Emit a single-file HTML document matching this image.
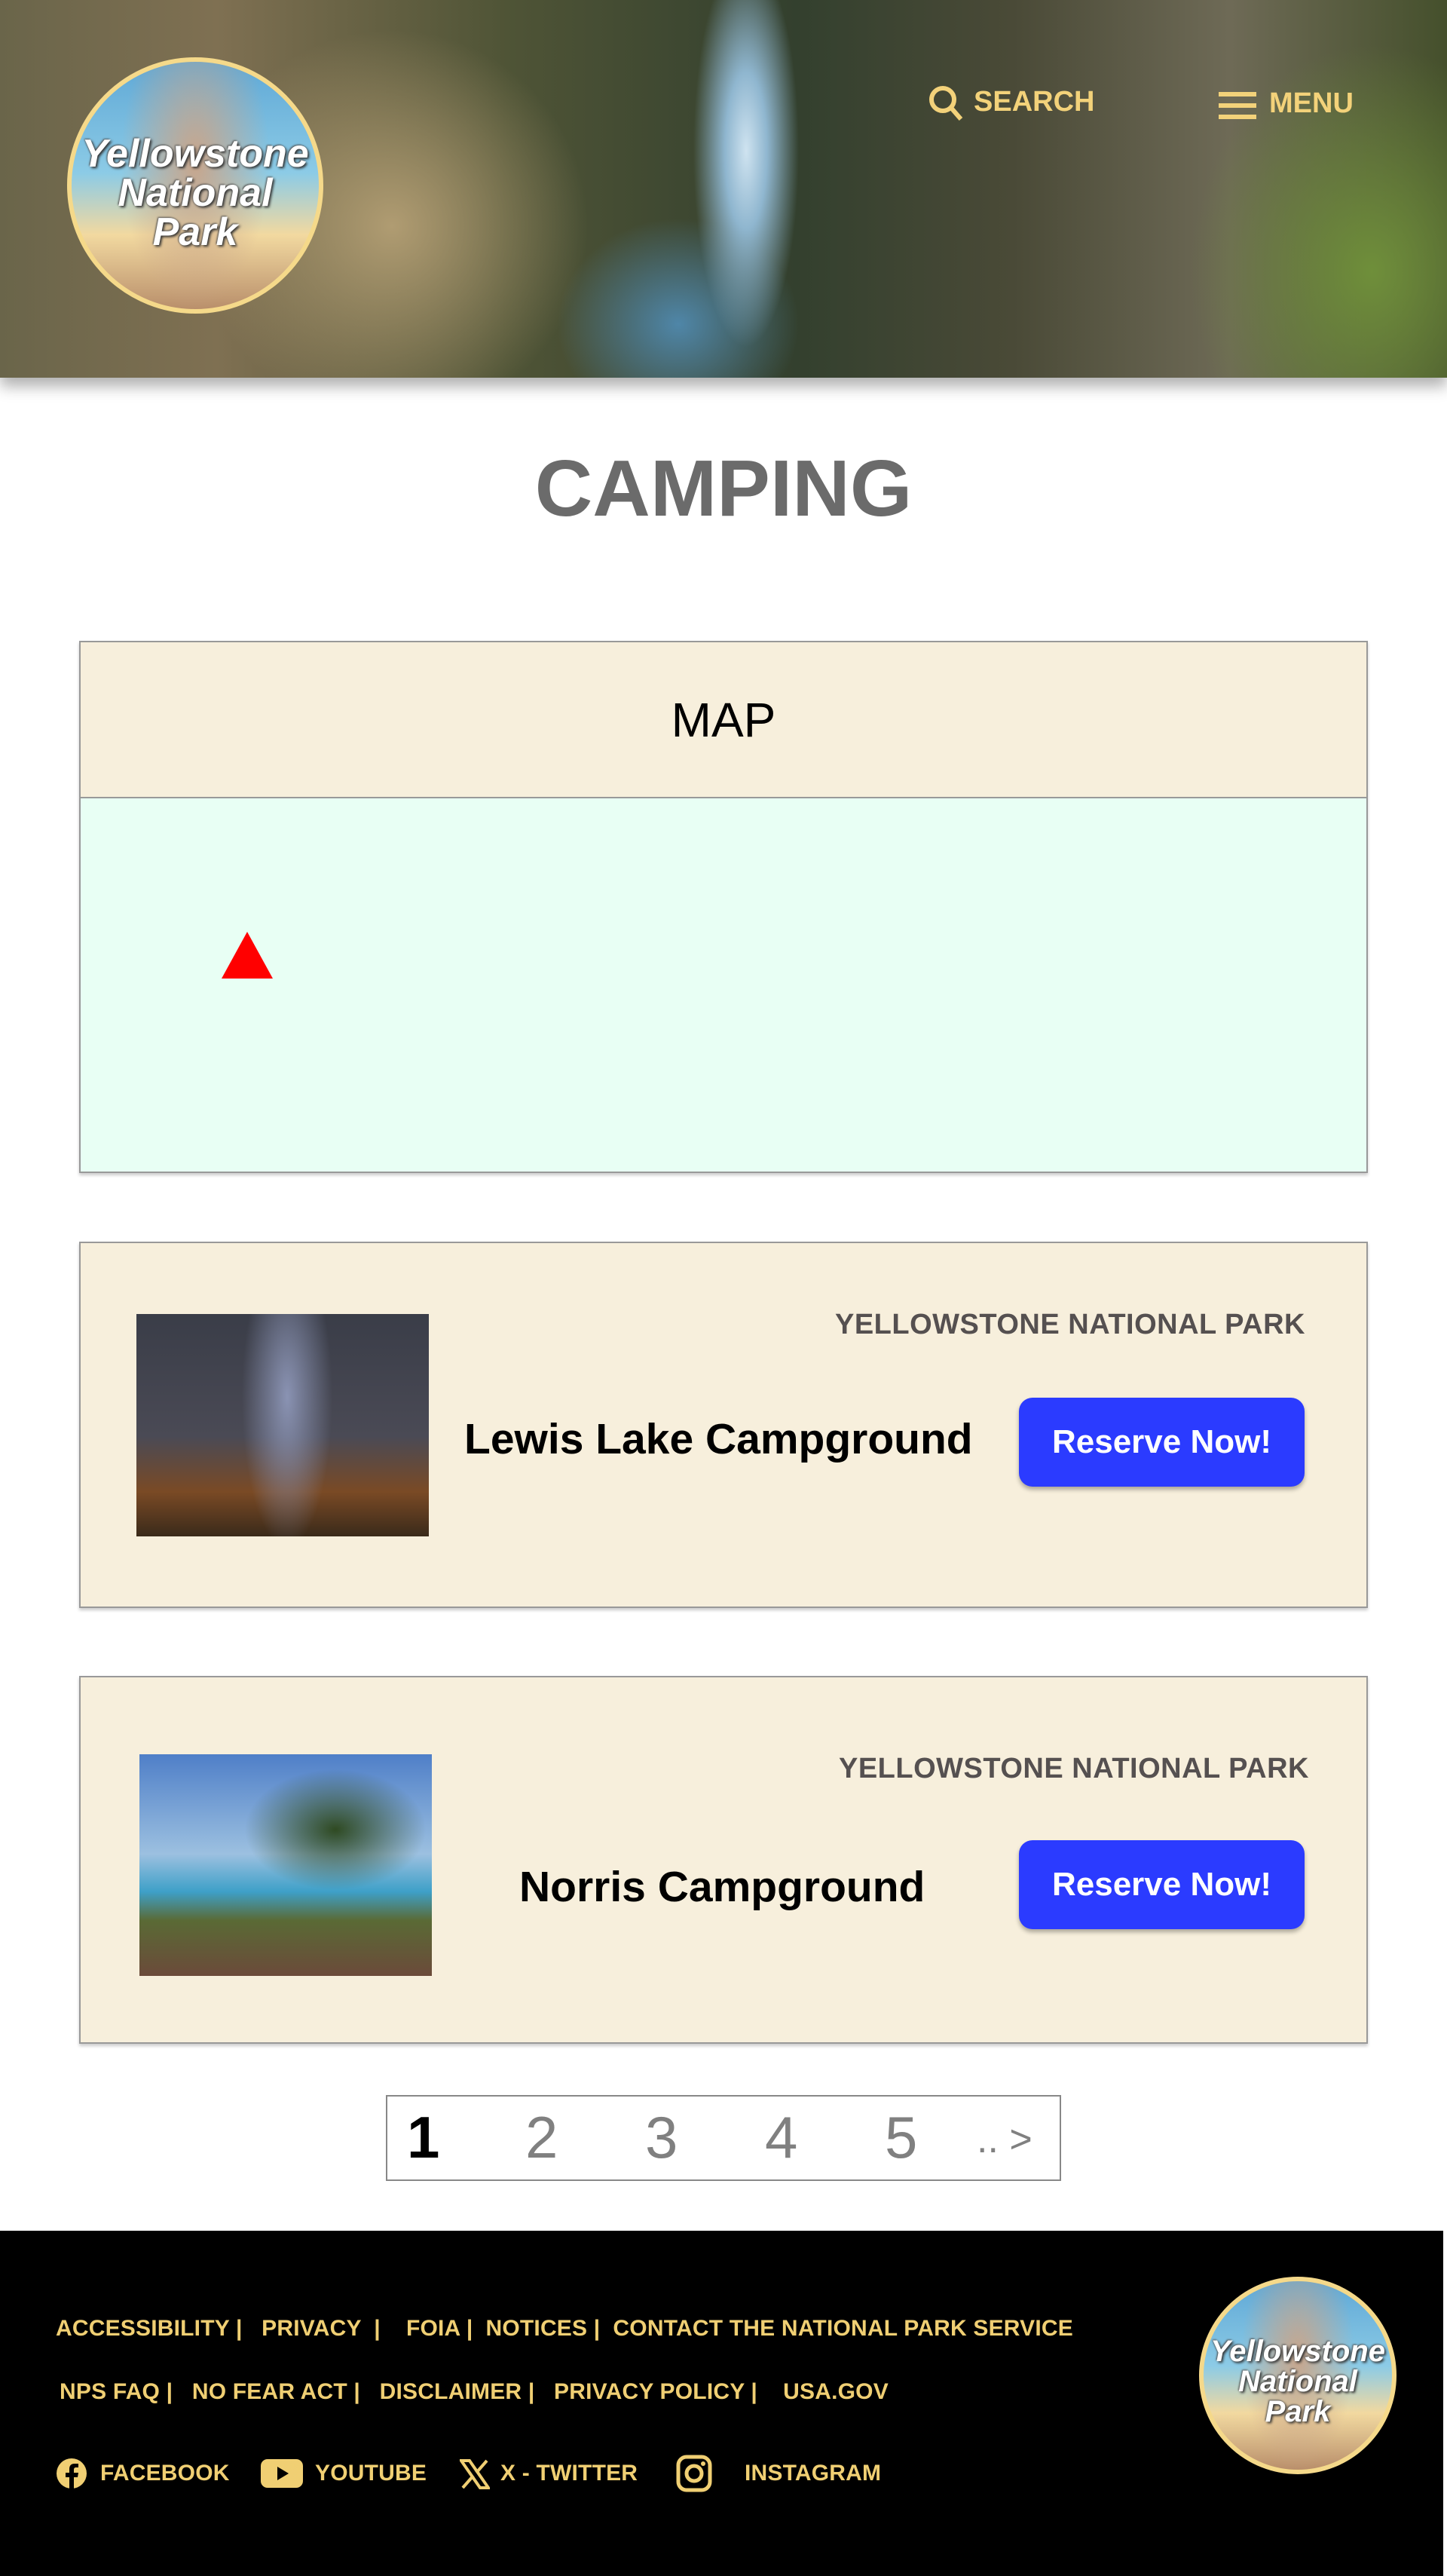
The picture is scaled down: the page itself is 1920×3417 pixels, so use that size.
<!DOCTYPE html>
<html><head><meta charset="utf-8"><style>
*{margin:0;padding:0;box-sizing:border-box}
body{width:1920px;height:3417px;position:relative;background:#fff;font-family:"Liberation Sans",sans-serif;overflow:hidden}
.abs{position:absolute}
#hdr{left:0;top:0;width:1920px;height:501px;overflow:hidden;box-shadow:0 12px 18px rgba(0,0,0,.3);
background:
radial-gradient(ellipse 70px 260px at 990px 200px,#cfe3f0 0%,#8fb6cf 40%,rgba(80,120,140,0) 100%),
radial-gradient(ellipse 160px 140px at 900px 430px,#4f86a8 0%,rgba(60,100,120,0) 100%),
radial-gradient(ellipse 240px 300px at 1820px 360px,#6f8f3a 0%,rgba(80,100,40,0) 100%),
radial-gradient(ellipse 260px 260px at 520px 300px,#b09c72 0%,rgba(150,130,90,0) 100%),
linear-gradient(90deg,#6a654a 0%,#7f7052 15%,#4f5436 35%,#33402e 55%,#4a4a37 70%,#6e6a56 85%,#45502c 100%);}
.logo{border-radius:50%;border:6px solid #f5d98a;background:radial-gradient(ellipse 30% 60% at 50% 40%,#c9a58a,rgba(200,160,130,0) 100%),linear-gradient(180deg,#5fa8d6 0%,#8ccbe6 45%,#f2d9a0 70%,#b98f6b 100%);display:flex;align-items:center;justify-content:center;text-align:center;color:#fff;font-style:italic;font-weight:bold;text-shadow:2px 2px 3px #333,-1px -1px 2px #555;line-height:1.0}
.nav{color:#f3d27a;font-weight:bold;font-size:38px}
h1{position:absolute;left:0;width:1920px;top:588px;text-align:center;font-size:106px;font-weight:bold;color:#6b6b6b}
.card{position:absolute;left:105px;width:1710px;background:#f7efdc;border:2px solid #999;box-shadow:0 3px 4px rgba(0,0,0,.2)}
.lbl{position:absolute;font-size:38px;font-weight:bold;color:#555050;text-align:right;width:900px;letter-spacing:0.5px}
.ttl{position:absolute;font-size:57px;font-weight:bold;color:#000}
.btn{position:absolute;width:379px;height:118px;background:#2b3bff;border-radius:18px;color:#fff;font-size:44px;font-weight:bold;display:flex;align-items:center;justify-content:center;box-shadow:0 4px 6px rgba(0,0,0,.3)}
.pg{position:absolute;top:2790px;font-size:78px;color:#808080}
.f{position:absolute;color:#f0cf73;font-weight:bold;font-size:30px;white-space:pre;letter-spacing:0.2px}
</style></head><body>
<div id="hdr" class="abs"></div>
<div class="abs logo" style="left:89px;top:76px;width:340px;height:340px;font-size:52px;padding-top:20px">Yellowstone<br>National<br>Park</div>
<svg class="abs" style="left:1231px;top:112px" width="48" height="50" viewBox="0 0 48 50"><circle cx="20" cy="20" r="15" fill="none" stroke="#f3d27a" stroke-width="6"/><line x1="31" y1="31" x2="44" y2="46" stroke="#f3d27a" stroke-width="6"/></svg>
<div class="abs nav" style="left:1292px;top:114px">SEARCH</div>
<svg class="abs" style="left:1617px;top:120px" width="50" height="40"><rect y="2" width="50" height="6" fill="#f3d27a"/><rect y="17" width="50" height="6" fill="#f3d27a"/><rect y="32" width="50" height="6" fill="#f3d27a"/></svg>
<div class="abs nav" style="left:1684px;top:116px">MENU</div>
<h1>CAMPING</h1>
<div class="abs" style="left:105px;top:850px;width:1710px;height:706px;border:2px solid #999;background:#e8fff4;box-shadow:0 3px 4px rgba(0,0,0,.2)">
<div style="height:207px;background:#f7efdc;border-bottom:2px solid #999;display:flex;align-items:center;justify-content:center;font-size:64px">MAP</div>
<svg class="abs" style="left:187px;top:384px" width="68" height="62"><polygon points="34,0 68,62 0,62" fill="#f00"/></svg>
</div>
<div class="card" style="top:1647px;height:486px"></div>
<div class="abs" style="left:181px;top:1743px;width:388px;height:295px;background:radial-gradient(ellipse 60px 200px at 200px 110px,#8a93b3,rgba(100,110,140,0) 100%),linear-gradient(180deg,#3a3d48 0%,#4a4a55 55%,#7a4a25 80%,#3a2a1a 100%)"></div>
<div class="lbl" style="left:832px;top:1736px">YELLOWSTONE NATIONAL PARK</div>
<div class="ttl" style="left:616px;top:1876px">Lewis Lake Campground</div>
<div class="btn" style="left:1352px;top:1854px">Reserve Now!</div>
<div class="card" style="top:2223px;height:488px"></div>
<div class="abs" style="left:185px;top:2327px;width:388px;height:294px;background:radial-gradient(ellipse 120px 80px at 260px 100px,#2f4a22,rgba(40,60,30,0) 100%),linear-gradient(180deg,#4f7fc8 0%,#9cc0e0 45%,#3ea0c8 62%,#5a6a35 75%,#6b4a3a 100%)"></div>
<div class="lbl" style="left:837px;top:2325px">YELLOWSTONE NATIONAL PARK</div>
<div class="ttl" style="left:689px;top:2470px">Norris Campground</div>
<div class="btn" style="left:1352px;top:2441px">Reserve Now!</div>
<div class="abs" style="left:512px;top:2779px;width:896px;height:114px;border:2px solid #888"></div>
<div class="pg" style="left:540px;color:#000;font-weight:bold">1</div>
<div class="pg" style="left:697px">2</div>
<div class="pg" style="left:856px">3</div>
<div class="pg" style="left:1015px">4</div>
<div class="pg" style="left:1174px">5</div>
<div class="pg" style="left:1296px;font-size:52px;top:2808px">.. &gt;</div>
<div class="abs" style="left:0;top:2959px;width:1915px;height:458px;background:#000"></div>
<div class="f" style="left:74px;top:3072px">ACCESSIBILITY |   PRIVACY  |    FOIA |  NOTICES |  CONTACT THE NATIONAL PARK SERVICE</div>
<div class="f" style="left:79px;top:3156px">NPS FAQ |   NO FEAR ACT |   DISCLAIMER |   PRIVACY POLICY |    USA.GOV</div>
<svg class="abs" style="left:74px;top:3260px" width="42" height="42"><circle cx="21" cy="21" r="20" fill="#f0cf73"/><path d="M24 42V26h5l1-6h-6v-4c0-2 1-3 3-3h3V8h-5c-5 0-7 3-7 7v5h-5v6h5v16z" fill="#000"/></svg>
<div class="f" style="left:133px;top:3264px">FACEBOOK</div>
<svg class="abs" style="left:346px;top:3262px" width="56" height="38"><rect width="56" height="38" rx="9" fill="#f0cf73"/><polygon points="22,10 22,28 37,19" fill="#000"/></svg>
<div class="f" style="left:418px;top:3264px">YOUTUBE</div>
<svg class="abs" style="left:610px;top:3262px" width="40" height="40"><path d="M2 2h11l25 36H27z" fill="none" stroke="#f0cf73" stroke-width="4"/><path d="M36 2L22 18M4 38l14-16" stroke="#f0cf73" stroke-width="4"/></svg>
<div class="f" style="left:664px;top:3264px">X - TWITTER</div>
<svg class="abs" style="left:897px;top:3256px" width="48" height="50"><rect x="3" y="3" width="42" height="44" rx="11" fill="none" stroke="#f0cf73" stroke-width="5"/><circle cx="24" cy="25" r="10" fill="none" stroke="#f0cf73" stroke-width="5"/><circle cx="36" cy="12" r="3" fill="#f0cf73"/></svg>
<div class="f" style="left:988px;top:3264px">INSTAGRAM</div>
<div class="abs logo" style="left:1591px;top:3020px;width:262px;height:262px;font-size:40px;padding-top:16px">Yellowstone<br>National<br>Park</div>
</body></html>
